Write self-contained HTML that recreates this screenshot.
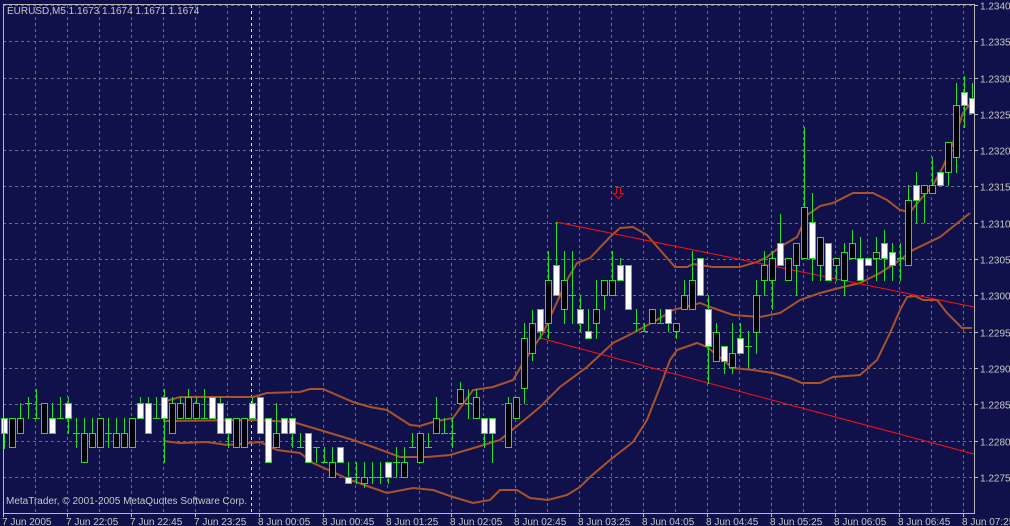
<!DOCTYPE html>
<html><head><meta charset="utf-8"><style>
html,body{margin:0;padding:0;background:#10104a;width:1010px;height:526px;overflow:hidden}
svg{display:block}
text{font-family:"Liberation Sans",sans-serif;font-size:10px;fill:#c8c8c8}
</style></head><body>
<svg id="s" width="1010" height="526" xmlns="http://www.w3.org/2000/svg"></svg>
<script>
(function(){
var s=document.getElementById('s'),h='';
var L=3,R=974,T=5,B=513;
function py(p){return 5+(1.2340-p)/0.0005*36.3;}
for(var gx=L+32;gx<R;gx+=32)h+='<line x1="'+(gx+.5)+'" y1="'+T+'" x2="'+(gx+.5)+'" y2="'+B+'" stroke="#6a6a80" stroke-dasharray="3,3"/>';
for(var i=0;i<=13;i++){var gy=Math.round(py(1.2340-i*0.0005))+.5;
 h+='<line x1="'+L+'" y1="'+gy+'" x2="'+R+'" y2="'+gy+'" stroke="#6a6a80" stroke-dasharray="3,3"/>';}
h+='<line x1="251.5" y1="'+T+'" x2="251.5" y2="'+B+'" stroke="#e0e0e0" stroke-dasharray="3,3"/>';
// bands
var lines=[
"163,402 180,397 253,397 267,393 300,392 310,389 323,389 353,402 370,407 387,410 410,425 420,426 433,422 453,418 473,390 493,387 513,380 523,363 543,333 567,280 577,263 590,258 610,237 620,228 633,227 647,235 660,250 675,267 687,267 693,264 713,267 740,267 757,262 767,257 780,247 797,237 807,215 820,206 833,203 853,193 873,193 887,200 900,210 910,212 920,200 933,185 943,167 953,143 963,113 973,100",
"163,421 253,420 293,422 320,430 353,440 373,447 400,457 427,457 450,455 477,447 500,440 540,407 560,387 587,367 613,343 633,333 657,320 673,310 700,303 713,308 733,315 760,317 780,313 800,300 820,293 843,287 860,283 880,273 900,260 913,250 940,237 970,213",
"163,441 180,443 207,442 227,445 260,442 277,450 300,453 313,463 333,472 350,480 370,487 387,493 413,488 433,490 453,497 473,503 490,500 500,490 517,490 530,498 548,500 567,495 580,487 590,477 610,460 633,442 647,420 660,387 670,360 677,350 697,343 707,347 733,368 753,370 773,373 790,378 802,383 820,383 833,377 860,375 877,360 890,333 900,310 907,297 915,296 923,300 937,300 947,313 962,328 972,328"];
lines.forEach(function(p){h+='<polyline fill="none" stroke="#a8532c" stroke-width="2" points="'+p+'"/>';});
h+='<line x1="556" y1="222" x2="974" y2="307" stroke="#ff1010"/>';
h+='<line x1="540" y1="338" x2="974" y2="454" stroke="#ff1010"/>';
// candles: type(W/B/D), bodyTop, bodyBot, wickTop, wickBot (3x zoom coords)
var z1=[['W',235,280,235,325],['B',235,322,235,322],['B',235,280,190,280],['D',190,190,170,235],['D',235,235,148,235],['B',190,280,190,280],['W',235,280,190,280],['D',235,235,170,235],['W',190,235,170,280],['D',280,280,235,322],['B',280,367,235,367],['B',280,322,235,322],['B',235,322,235,322],['D',280,280,235,322],['B',280,322,235,322],['B',280,322,235,322],['B',235,322,235,322],['W',190,235,170,235],['W',190,280,170,280],['D',235,235,170,235],['W',170,235,148,367],['B',190,280,170,280],['B',190,235,170,235],['B',170,235,148,235],['B',190,235,170,235],['D',235,235,148,235],['W',170,235,170,235],['W',190,280,170,280],['W',235,280,235,322],['B',235,322,235,322],['B',235,322,235,322],['W',190,235,170,235],['W',170,280,170,280],['W',235,367,235,367],['B',280,322,190,322],['W',235,280,235,280],['W',235,280,235,322],['D',322,322,280,322],['W',280,367,280,367],['D',322,322,322,367],['D',367,367,322,367],['B',367,410,322,410],['W',322,367,322,367],['W',410,430,367,430],['D',410,410,367,430],['B',410,430,367,440],['D',410,410,367,430],['D',410,410,367,430],['W',367,410,367,430],['D',367,367,322,410],['B',367,410,322,410],['D',322,322,280,322],['B',280,367,280,367],['D',322,322,280,322],['B',235,280,170,280],['D',280,280,235,280],['D',280,280,235,322],['B',148,190,127,190],['D',190,190,148,235],['B',170,235,148,235],['W',235,280,235,322],['W',235,280,235,367]];
var z2=[['B',1030,1160,1010,1160],['B',1010,1075,1010,1075],['B',835,985,790,1030],['B',790,880,750,900],['W',748,812,748,835],['B',660,790,572,835],['W',615,705,487,705],['B',660,748,572,790],['D',705,705,572,790],['W',748,790,705,812],['W',812,835,748,835],['B',748,790,660,835],['B',660,705,660,748],['B',660,705,572,705],['W',615,660,595,660],['W',615,748,615,748],['D',790,790,748,812],['D',812,812,790,812],['B',748,790,748,790],['D',790,790,748,790],['W',748,790,748,812],['B',790,812,790,835],['B',705,748,660,748],['B',660,748,572,748],['W',595,705,595,705],['W',748,858,705,968],['B',815,902,790,902],['W',858,902,858,940],['B',880,922,790,940],['W',835,880,790,880],['D',858,858,812,922],['B',705,815,660,880],['B',615,660,572,705],['B',595,660,572,748],['W',550,615,462,615],['B',595,660,595,660],['B',550,615,550,705],['B',442,595,202,595],['W',487,595,400,660],['B',530,615,530,660],['W',550,660,550,660],['B',595,615,595,660],['B',575,660,550,705],['B',550,595,510,595],['W',595,660,530,660],['W',595,615,595,615],['B',575,595,530,660],['W',550,595,510,660],['W',575,615,550,660],['D',595,595,550,660],['B',420,615,375,615],['W',375,420,335,487],['B',375,400,375,487],['B',375,400,290,400],['W',335,375,335,375],['B',245,335,245,375],['B',135,290,70,335],['W',95,135,48,200],['W',115,160,70,160]];
function draw(arr,k0,off){arr.forEach(function(c,j){var k=k0+j,cx=4+8*k;
 var bt=Math.round(c[1]/3+off),bb=Math.round(c[2]/3+off),wt=Math.round(c[3]/3+off),wb=Math.round(c[4]/3+off);
 h+='<line x1="'+(cx+.5)+'" y1="'+wt+'" x2="'+(cx+.5)+'" y2="'+(wb+1)+'" stroke="#22e022"/>';
 if(c[0]=='D')h+='<line x1="'+(cx-3)+'" y1="'+(bt+.5)+'" x2="'+(cx+4)+'" y2="'+(bt+.5)+'" stroke="#22e022"/>';
 else h+='<rect x="'+(cx-2.5)+'" y="'+(bt+.5)+'" width="6" height="'+Math.max(1,bb-bt)+'" fill="'+(c[0]=='W'?'#ffffff':'#000000')+'" stroke="#22e022"/>';});}
draw(z1,0,340);draw(z2,63,60);
h+='<path d="M616.5 187.5h4v6h3l-5 5-5-5h3z" fill="none" stroke="#e01010"/>';
h+='<rect x="975" y="0" width="35" height="526" fill="#10104a"/>';
h+='<rect x="0" y="514" width="1010" height="12" fill="#10104a"/>';
h+='<rect x="3.5" y="4.5" width="971" height="509" fill="none" stroke="#b8b8b8"/>';
for(i=0;i<=13;i++){var y=Math.round(py(1.2340-i*0.0005))+.5;h+='<line x1="'+R+'" y1="'+y+'" x2="'+(R+4)+'" y2="'+y+'" stroke="#c0c0c0"/><text x="980" y="'+(y+4)+'">'+(1.2340-i*0.0005).toFixed(4)+'</text>';}
var lab=['7 Jun 2005','7 Jun 22:05','7 Jun 22:45','7 Jun 23:25','8 Jun 00:05','8 Jun 00:45','8 Jun 01:25','8 Jun 02:05','8 Jun 02:45','8 Jun 03:25','8 Jun 04:05','8 Jun 04:45','8 Jun 05:25','8 Jun 06:05','8 Jun 06:45','8 Jun 07:25'];
for(i=0;i<lab.length;i++){var x=3+64*i;h+='<line x1="'+(x+.5)+'" y1="513" x2="'+(x+.5)+'" y2="517" stroke="#c0c0c0"/><text x="'+(x-1)+'" y="525">'+lab[i]+'</text>';}
h+='<text x="7" y="14">EURUSD,M5  1.1673 1.1674 1.1671 1.1674</text>';
h+='<text x="6" y="504">MetaTrader, © 2001-2005 MetaQuotes Software Corp.</text>';
s.innerHTML=h;
})();
</script>
</body></html>
